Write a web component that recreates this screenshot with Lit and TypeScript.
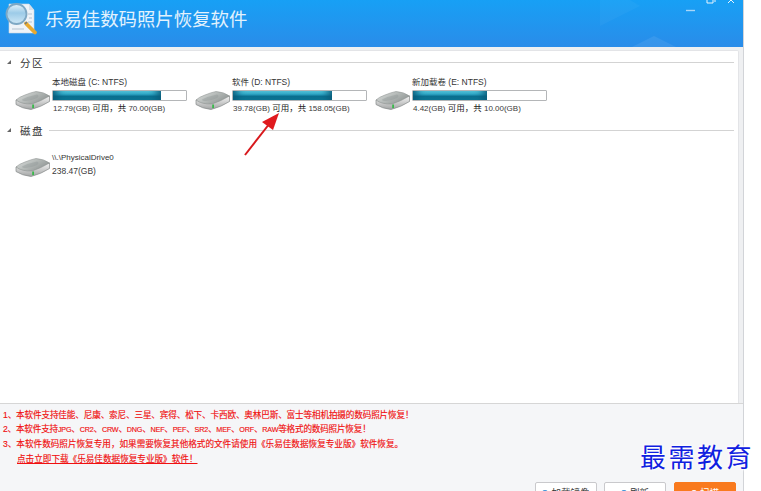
import { LitElement, html, css } from "lit";
import { customElement } from "lit/decorators.js";

const driveIcon = html`<svg class="icon" width="36" height="24" viewBox="0 0 36 24">
  <defs>
    <linearGradient id="t" x1="0" y1="0" x2="1" y2="0.6"><stop offset="0" stop-color="#dfe2e1"/><stop offset="0.55" stop-color="#b4b9b7"/><stop offset="1" stop-color="#8f9594"/></linearGradient>
    <linearGradient id="b" x1="0" y1="0" x2="0" y2="1"><stop offset="0" stop-color="#f4f4f4"/><stop offset="1" stop-color="#a2a4a4"/></linearGradient>
  </defs>
  <path d="M1 11 L1 15.5 Q7 19.5 16 20.5 Q26 18 34.5 12.5 L34.5 7 Z" fill="url(#b)" stroke="#858a89" stroke-width=".7"/>
  <path d="M1 11 Q4 8 10 6 Q16 3.5 21 2.5 Q29 3 34.5 7 Q26 12 17 15 Q7 15.5 1 11 Z" fill="url(#t)" stroke="#8e9392" stroke-width=".6"/>
  <path d="M7 10.5 Q14 7 22 5.5 Q25 7 22 9 Q15 12.5 9 12 Q7 11.5 7 10.5 Z" fill="#8f9695" opacity=".4"/>
  <rect x="17.2" y="15.5" width="1.8" height="3.6" fill="#39b94a"/>
</svg>`;

interface D { name: string; info: [string, string, string]; pct: number }
const parts: D[] = [
  { name: "本地磁盘 (C: NTFS)", info: ["12.79(GB) ", "可用\uFF0C共", " 70.00(GB)"], pct: 81 },
  { name: "软件 (D: NTFS)", info: ["39.78(GB) ", "可用\uFF0C共", " 158.05(GB)"], pct: 74.5 },
  { name: "新加载卷 (E: NTFS)", info: ["4.42(GB) ", "可用\uFF0C共", " 10.00(GB)"], pct: 55.5 },
];

@customElement("app-root")
export class AppRoot extends LitElement {
  static styles = css`
    :host { display: block; position: relative; width: 761px; height: 491px; overflow: hidden; background: #fff; font-family: "Liberation Sans", "Noto Sans CJK SC", sans-serif; }
    .window { width: 743px; height: 491px; display: flex; flex-direction: column; background: #eff0f2; border-right: 1px solid #d2d4d8; box-sizing: content-box; }
    .header { position: relative; overflow: hidden; height: 47px; flex: none; background: linear-gradient(180deg, #17a0f5 0%, #2a8ce9 100%); display: flex; align-items: center; padding-left: 4px; gap: 7px; }
    .title { position: relative; color: #e3f2fd; font-size: 18.4px; letter-spacing: 0; line-height: 26px; margin-top: -7px; }
    .logo { flex: none; position: relative; margin-top: -9px; }
    .deco { position: absolute; left: 0; top: 0; }
    .winbtns { position: absolute; right: 0; top: 0; }
    .main { flex: none; height: 354px; margin: 3px 4px 0 0; background: #fff; border: 1px solid #e3e4e7; border-left: 0; border-radius: 0 2px 0 0; box-sizing: border-box; padding-top: 2px; }
    .sec { display: flex; align-items: center; height: 18px; padding: 0 4px 0 7px; }
    .tri { width: 0; height: 0; border-left: 4px solid transparent; border-bottom: 4px solid #666; margin-right: 9px; }
    .sec b { font-weight: 400; font-size: 10.5px; letter-spacing: 1.5px; color: #333; width: 29px; flex: none; }
    .sec i { flex: 1; height: 1px; background: #d3d3d3; }
    .drives { display: flex; padding: 6px 0 0 15px; height: 43px; }
    .drive { width: 180px; display: flex; align-items: flex-start; flex: none; }
    .icon { flex: none; margin: 12px 1px 0 0; }
    .txt { width: 135px; font-size: 8.5px; line-height: 11px; color: #3a3a3a; white-space: nowrap; }
    .name { height: 13px; line-height: 11px; color: #333; }
    .bar { width: 133px; height: 9px; border: 1px solid #b4b6b8; border-radius: 1px; background: #fff; }
    .fill { height: 100%; background: linear-gradient(180deg, #5cd0e6 0%, #2fa7c6 35%, #0b6f90 60%, #0d7a98 100%); box-shadow: inset -10px 0 8px -6px #0a5c7a, inset 10px 0 8px -6px #0a5c7a; }
    .info { margin-top: 2px; font-size: 8px; padding-left: 1px; }
    .info span { font-size: 8.5px; color: #222; }
    .gap { height: 1px; }
    .phys { padding-top: 13px; height: 46px; }
    .phys .name { height: 14px; font-size: 8px; line-height: 12px; }
    .phys .icon { margin-top: 4px; }
    .foot { flex: 1; background: #f5f6f8; border-top: 1px solid #d6d6d6; margin-top: -1px; position: relative; padding: 4px 0 0 3px; color: #f01010; font-size: 8.6px; line-height: 14.2px; white-space: nowrap; }
    .foot u { margin-left: 14px; font-weight: 400; text-underline-offset: 1px; }
    .foot div { -webkit-text-stroke: .15px #f01010; }
    .l1 { letter-spacing: -.14px; }
    .l2 { letter-spacing: -.2px; }
    .l2 span { font-size: 7.2px; }
    .l3 { letter-spacing: 0; }
    .btns { position: absolute; left: 535px; top: 78px; display: flex; gap: 7px; }
    .foot .btns div { -webkit-text-stroke: 0; }
    .btn { width: 62px; height: 24px; box-sizing: border-box; border: 1px solid #c9c9cc; border-radius: 2px; background: #fff; font-size: 9.5px; color: #333; display: flex; justify-content: center; gap: 3px; padding-top: 4px; line-height: 12px; }
    .btn.primary { background: #f97a1e; border-color: #f97a1e; color: #fff; width: 62px; margin-left: 1px; }
    .btn s { width: 6px; height: 6px; background: #3b90d6; border-radius: 50%; margin-top: 3px; text-decoration: none; flex: none; }
    .btn.primary s { background: #fff; }
    .arrow { position: absolute; left: 240px; top: 108px; }
    .mark { position: absolute; left: 640px; top: 443px; font-family: "Liberation Serif", "Noto Sans CJK TC", serif; font-size: 26px; line-height: 32px; letter-spacing: 2.5px; color: #1020e0; white-space: nowrap; text-shadow: 0 0 2px #fff, 0 0 2px #fff, 0 0 3px #fff, 0 0 4px #fff; }
  `;

  private drive(d: D) {
    return html`<div class="drive">${driveIcon}<div class="txt">
      <div class="name">${d.name}</div>
      <div class="bar"><div class="fill" style="width:${d.pct}%"></div></div>
      <div class="info">${d.info[0]}<span>${d.info[1]}</span>${d.info[2]}</div>
    </div></div>`;
  }

  render() {
    return html`<div class="window">
      <div class="header">
        <svg class="deco" width="743" height="47" viewBox="0 0 743 47">
          <path d="M600 26 L640 6 L630 0 L600 0 Z" fill="#fff" opacity=".03"/>
          <path d="M632 47 L654 36 L676 47 Z" fill="#fff" opacity=".08"/>
        </svg>
        <svg class="logo" width="34" height="36" viewBox="0 0 34 36">
          <defs>
            <linearGradient id="lens" x1="0" y1="0" x2="0" y2="1"><stop offset="0" stop-color="#e6f4fb"/><stop offset=".45" stop-color="#9ccbe8"/><stop offset="1" stop-color="#cfe8f6"/></linearGradient>
          </defs>
          <path d="M5 3 H25 L30 9 V32 H5 Z" fill="#eef3f8" stroke="#c9d6e2" stroke-width=".6"/>
          <path d="M25 3 V9 H30" fill="#d5dfe9"/>
          <path d="M24 13 H28 M25 17 H28 M24 21 H28 M8 28 H20" stroke="#b5c3d0"/>
          <circle cx="12.5" cy="13" r="10" fill="url(#lens)" stroke="#7ea8c4" stroke-width="1.8"/>
          <path d="M22 22.5 L31 31.5" stroke="#e8a92e" stroke-width="3.8" stroke-linecap="round"/>
          <path d="M21 23 L23 21" stroke="#6d7a84" stroke-width="1.5"/>
        </svg>
        <div class="title">乐易佳数码照片恢复软件</div>
        <svg class="winbtns" width="60" height="12" viewBox="0 0 60 12">
          <path d="M3 10.5 H12" stroke="#a9d6f8" stroke-width="1.4"/>
          <path d="M24 0 V3 H30 V0 M32 0 V2" stroke="#e8f4fd" fill="none"/>
          <path d="M45 3 L48 0 M51 3 L48 0" stroke="#e8f4fd" fill="none"/>
        </svg>
      </div>
      <div class="main">
        <div class="sec"><span class="tri"></span><b>分区</b><i></i></div>
        <div class="drives">${parts.map((p) => this.drive(p))}</div>
        <div class="gap"></div>
        <div class="sec"><span class="tri"></span><b>磁盘</b><i></i></div>
        <div class="drives phys">
          <div class="drive">${driveIcon}<div class="txt">
            <div class="name">\\\\.\\PhysicalDrive0</div>
            <div>238.47(GB)</div>
          </div></div>
        </div>
      </div>
      <div class="foot">
        <div class="l1">1、本软件支持佳能、尼康、索尼、三星、宾得、松下、卡西欧、奥林巴斯、富士等相机拍摄的数码照片恢复&#xFF01;</div>
        <div class="l2">2、本软件支持<span>JPG</span>、<span>CR2</span>、<span>CRW</span>、<span>DNG</span>、<span>NEF</span>、<span>PEF</span>、<span>SR2</span>、<span>MEF</span>、<span>ORF</span>、<span>RAW</span>等格式的数码照片恢复&#xFF01;</div>
        <div class="l3">3、本软件数码照片恢复专用&#xFF0C;如果需要恢复其他格式的文件请使用《乐易佳数据恢复专业版》软件恢复。</div>
        <div><u>点击立即下载《乐易佳数据恢复专业版》软件&#xFF01;</u></div>
        <div class="btns">
          <div class="btn"><s></s>加载镜像</div>
          <div class="btn"><s></s>刷新</div>
          <div class="btn primary"><s></s>扫描</div>
        </div>
      </div>
    </div>
    <svg class="arrow" width="44" height="52" viewBox="0 0 44 52">
      <path d="M5 47 L30 15" stroke="#d8181c" stroke-width="2" fill="none"/>
      <path d="M39 5 L22 14 L33 22 Z" fill="#e01a1e"/>
    </svg>
    <div class="mark">最需教育</div>`;
  }
}
